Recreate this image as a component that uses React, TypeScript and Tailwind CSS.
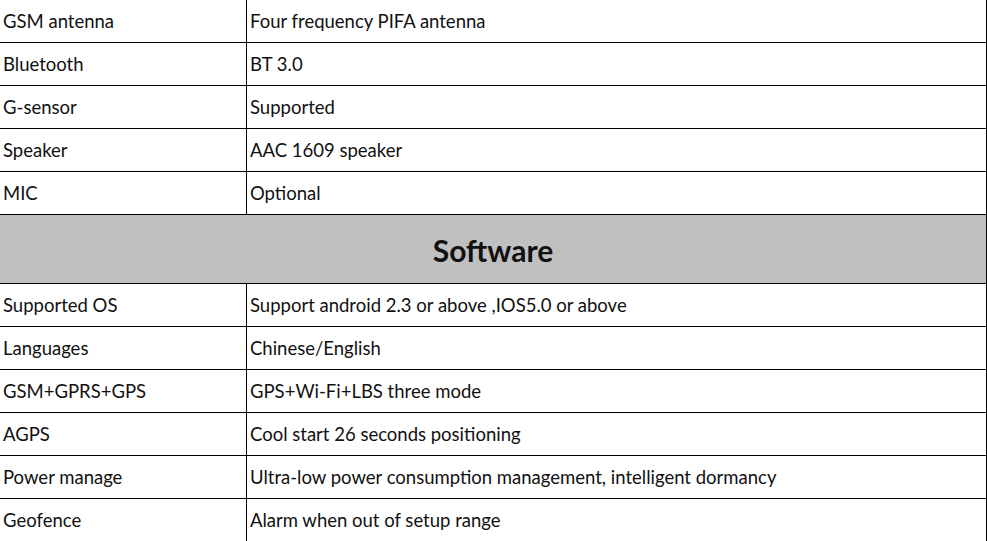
import React from "react";

const top: [string, string][] = [
  ["GSM antenna", "Four frequency PIFA antenna"],
  ["Bluetooth", "BT 3.0"],
  ["G-sensor", "Supported"],
  ["Speaker", "AAC 1609 speaker"],
  ["MIC", "Optional"],
];

const bottom: [string, string][] = [
  ["Supported OS", "Support android 2.3 or above ,IOS5.0 or above"],
  ["Languages", "Chinese/English"],
  ["GSM+GPRS+GPS", "GPS+Wi-Fi+LBS three mode"],
  ["AGPS", "Cool start 26 seconds positioning"],
  ["Power manage", "Ultra-low power consumption management, intelligent dormancy"],
  ["Geofence", "Alarm when out of setup range"],
];

function Row({ a, b }: { a: string; b: string }) {
  return (
    <div className="grid grid-cols-[247px_1fr] h-[43px] border-b border-black">
      <div className="border-r border-black flex items-center pl-[3px] pt-[2px]">{a}</div>
      <div className="flex items-center pl-[3px] pt-[2px]">{b}</div>
    </div>
  );
}

export default function App() {
  return (
    <div
      className="w-[987px] h-[541px] overflow-hidden bg-white text-[#111] text-[18.5px]"
      style={{ fontFamily: "Lato, 'Open Sans', sans-serif" }}
    >
      <div className="w-[987px] border-r border-black">
        {top.map(([a, b]) => (
          <Row key={a} a={a} b={b} />
        ))}
        <div className="h-[69px] bg-[#c0c0c0] border-b border-black flex items-center justify-center pt-[2px]">
          <span className="text-[30px] font-bold text-[#111]">Software</span>
        </div>
        {bottom.map(([a, b]) => (
          <Row key={a} a={a} b={b} />
        ))}
      </div>
    </div>
  );
}
